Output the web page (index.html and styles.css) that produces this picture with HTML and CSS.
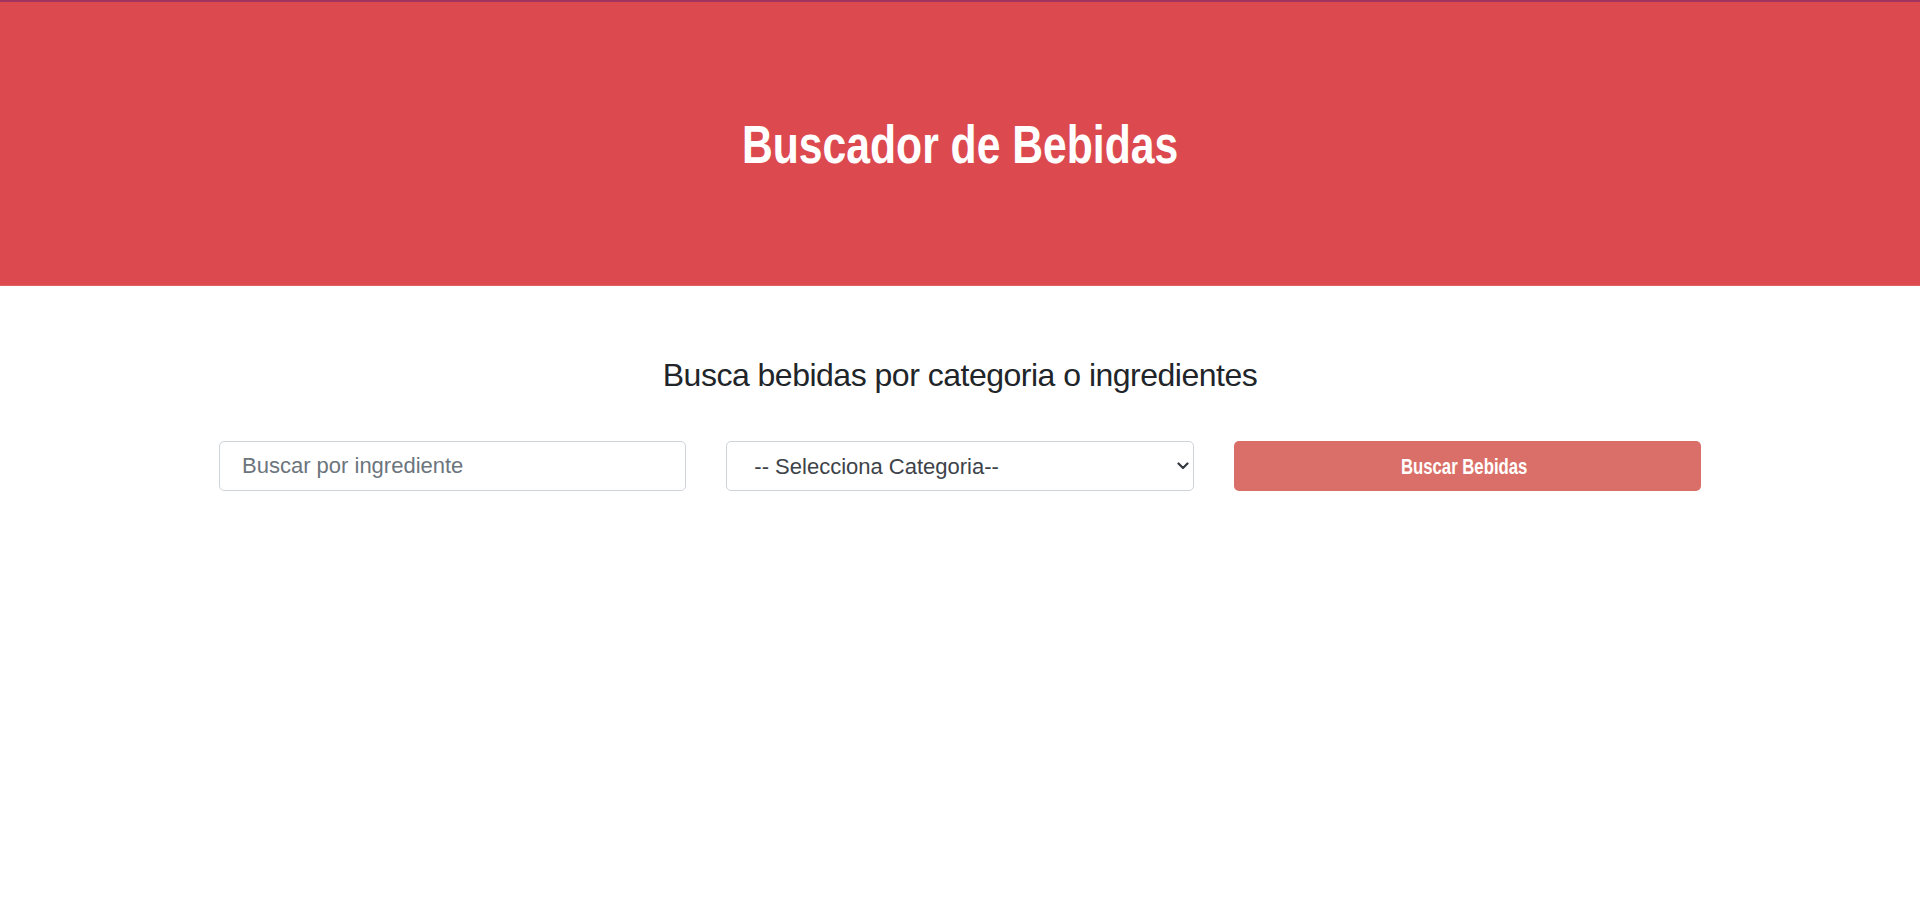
FILE: index.html
```html
<!DOCTYPE html>
<html lang="es">
<head>
<meta charset="utf-8">
<title>Buscador de Bebidas</title>
<link rel="stylesheet" href="styles.css">
</head>
<body>
<header class="site-header">
  <h1 class="site-title">Buscador de Bebidas</h1>
</header>
<main class="main">
  <h2 class="subtitle">Busca bebidas por categoria o ingredientes</h2>
  <form class="search-form">
    <input class="field" type="text" placeholder="Buscar por ingrediente">
    <div class="select-wrap">
      <select class="field select">
        <option>-- Selecciona Categoria--</option>
      </select>
      <svg class="chevron" width="12" height="8" viewBox="0 0 12 8"><path d="M1.5 1.5 L6 6 L10.5 1.5" fill="none" stroke="#343a40" stroke-width="2.2" stroke-linecap="round" stroke-linejoin="round"/></svg>
    </div>
    <button class="btn" type="button"><span class="btn-label">Buscar Bebidas</span></button>
  </form>
</main>
</body>
</html>
```
FILE: styles.css
```css
html, body {
  margin: 0;
  padding: 0;
  background: #ffffff;
}
body {
  font-family: "Liberation Sans", Arial, sans-serif;
  color: #212529;
}
.site-header {
  height: 284px;
  border-top: 2px solid #a1345f;
  background: #dc4a50;
  display: flex;
  align-items: center;
  justify-content: center;
  box-shadow: inset 0 -1px 0 #e0605f;
}
.site-title {
  margin: 0 0 1px 0;
  font-family: "Liberation Sans", Arial, sans-serif;
  font-weight: 700;
  font-size: 54px;
  line-height: 1;
  color: #ffffff;
  transform: scaleX(0.79);
  white-space: nowrap;
}
.main {
  width: 1482px;
  margin: 0 auto;
}
.subtitle {
  margin: 70px 0 47px 0;
  text-align: center;
  font-weight: 400;
  font-size: 32px;
  line-height: 1.2;
  letter-spacing: -0.5px;
  color: #212529;
}
.search-form {
  display: grid;
  grid-template-columns: repeat(3, 1fr);
  column-gap: 40px;
}
.field {
  box-sizing: border-box;
  width: 100%;
  height: 50px;
  margin: 0;
  border: 1px solid #ced4da;
  border-radius: 5px;
  background: #ffffff;
  font-family: "Liberation Sans", Arial, sans-serif;
  font-size: 22px;
  color: #3d4349;
  padding: 0 22px;
  outline: none;
}
.field::placeholder {
  color: #6c757d;
  opacity: 1;
}
.select-wrap {
  position: relative;
}
.select {
  -webkit-appearance: none;
  appearance: none;
  padding: 0 30px 0 27px;
}
.chevron {
  position: absolute;
  right: 5px;
  top: 21px;
  pointer-events: none;
}
.btn {
  height: 50px;
  margin: 0;
  border: none;
  border-radius: 5px;
  background: #da6f69;
  color: #ffffff;
  font-family: "Liberation Sans", Arial, sans-serif;
  font-weight: 700;
  font-size: 22px;
  cursor: pointer;
  display: flex;
  align-items: center;
  justify-content: center;
  padding: 2px 6px 0 0;
}
.btn-label {
  display: inline-block;
  transform: scaleX(0.76);
  white-space: nowrap;
}
```
